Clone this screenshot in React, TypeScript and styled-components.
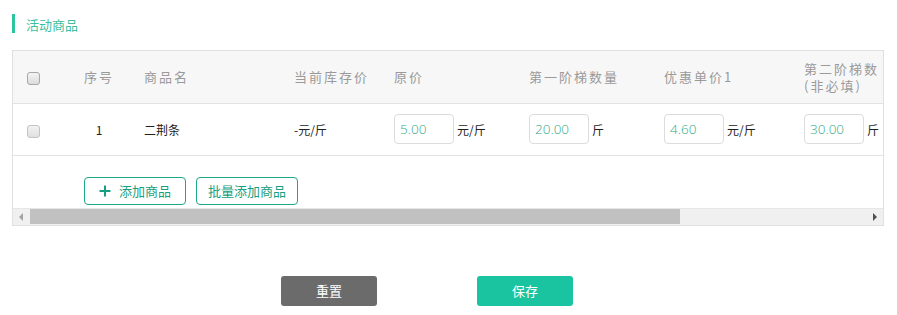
import React from "react";
import styled, { createGlobalStyle } from "styled-components";

const Global = createGlobalStyle`
  html, body { margin: 0; padding: 0; background: #fff; }
  body { font-family: "Noto Sans CJK SC", "Noto Sans", sans-serif; color: #333; }
  * { box-sizing: border-box; }
`;

const Page = styled.div`
  width: 897px;
  padding: 14px 13px 0 12px;
`;

const SectionTitle = styled.div`
  display: flex;
  align-items: center;
  height: 19px;
  border-left: 3px solid #2ec4a0;
  padding-left: 11px;
  font-size: 13px;
  color: #3dbf9f;
  line-height: 19px;
  padding-top: 1px;
`;

const TableBox = styled.div`
  margin-top: 17px;
  border: 1px solid #e1e1e1;
  overflow: hidden;
`;

const Scroller = styled.div`
  overflow: hidden;
`;

const Grid = styled.table`
  width: 1120px;
  table-layout: fixed;
  border-collapse: collapse;
  font-size: 12px;
`;

const HeadRow = styled.tr`
  background: #f7f7f7;
  height: 52px;
  border-bottom: 1px solid #e3e3e3;
`;

const Th = styled.th<{ $w?: number; $center?: boolean; $pl?: number; $pr?: number }>`
  ${(p) => (p.$w ? `width: ${p.$w}px;` : "")}
  padding: 0 ${(p) => (p.$pr ?? 10)}px 0 ${(p) => (p.$pl ?? 15)}px;
  text-align: ${(p) => (p.$center ? "center" : "left")};
  font-weight: normal;
  font-size: 13px;
  color: #9a9a9a;
  letter-spacing: 2px;
  line-height: 17px;
  vertical-align: middle;
`;

const WrapLabel = styled.span`
  display: block;
  width: 82px;
`;

const BodyRow = styled.tr`
  height: 52px;
  border-bottom: 1px solid #e3e3e3;
`;

const Td = styled.td<{ $center?: boolean; $pl?: number }>`
  padding: 0 0 0 ${(p) => (p.$pl ?? 15)}px;
  text-align: ${(p) => (p.$center ? "center" : "left")};
  color: #222;
  font-size: 12px;
  white-space: nowrap;
  vertical-align: middle;
`;

const Check = styled.span<{ $light?: boolean }>`
  display: inline-block;
  width: 13px;
  height: 13px;
  border-radius: 3px;
  border: 1px solid ${(p) => (p.$light ? "#c4c4c4" : "#a8a8a8")};
  background: ${(p) =>
    p.$light
      ? "linear-gradient(#f2f2f2, #e0e0e0)"
      : "linear-gradient(#f4f4f4, #dcdcdc)"};
  vertical-align: middle;
`;

const InputGroup = styled.div`
  display: flex;
  align-items: center;
`;

const NumInput = styled.input`
  width: 60px;
  height: 30px;
  border: 1px solid #dcdcdc;
  border-radius: 4px;
  padding: 0 5px;
  font-family: "Open Sans", "Noto Sans", sans-serif;
  font-size: 13.5px;
  font-weight: 300;
  color: #2fa986;
  outline: none;
  background: #fff;
`;

const Unit = styled.span`
  margin-left: 3px;
  font-size: 12px;
  color: #222;
`;

const ToolRow = styled.div`
  height: 52px;
  display: flex;
  align-items: flex-end;
  gap: 10px;
  padding: 0 0 3px 71px;
`;

const OutlineBtn = styled.button`
  display: inline-flex;
  align-items: center;
  justify-content: center;
  gap: 8px;
  width: 102px;
  height: 28px;
  border: 1px solid #1ba98a;
  border-radius: 4px;
  background: #fff;
  color: #179f81;
  font-family: "Noto Sans CJK SC", sans-serif;
  font-size: 13px;
  padding: 0;
  cursor: pointer;
`;

const ScrollBar = styled.div`
  display: flex;
  height: 17px;
  background: #f0f0f0;
  border-top: 1px solid #e6e6e6;
`;

const Arrow = styled.div<{ $dir: "left" | "right"; $active?: boolean }>`
  width: 16px;
  display: flex;
  align-items: center;
  justify-content: center;
  &::before {
    content: "";
    width: 0;
    height: 0;
    border-top: 4px solid transparent;
    border-bottom: 4px solid transparent;
    ${(p) =>
      p.$dir === "left"
        ? `border-right: 4px solid ${p.$active ? "#505050" : "#a3a3a3"};`
        : `border-left: 4px solid ${p.$active ? "#505050" : "#a3a3a3"};`}
  }
`;

const Track = styled.div`
  flex: 1;
  display: flex;
  align-items: center;
  padding-left: 1px;
`;

const Thumb = styled.div<{ $ratio: number }>`
  width: ${(p) => p.$ratio * 100}%;
  height: 15px;
  background: #c1c1c1;
`;

const Actions = styled.div`
  display: flex;
  gap: 100px;
  margin-top: 50px;
  padding-left: 269px;
`;

const SolidBtn = styled.button<{ $tone: "gray" | "green" }>`
  width: 96px;
  height: 30px;
  border: none;
  border-radius: 3px;
  background: ${(p) => (p.$tone === "gray" ? "#6b6b6b" : "#1bc4a0")};
  color: #fff;
  font-family: "Noto Sans CJK SC", sans-serif;
  font-size: 13px;
  cursor: pointer;
`;

const Plus = () => (
  <svg width="12" height="12" viewBox="0 0 12 12">
    <path d="M6 0.5v11M0.5 6h11" stroke="#179f81" strokeWidth="2" fill="none" />
  </svg>
);

type Cell = { value: string; unit: string };
const cells: Cell[] = [
  { value: "5.00", unit: "元/斤" },
  { value: "20.00", unit: "斤" },
  { value: "4.60", unit: "元/斤" },
  { value: "30.00", unit: "斤" },
];

export default function App() {
  return (
    <>
      <Global />
      <Page>
        <SectionTitle>活动商品</SectionTitle>
        <TableBox>
          <Scroller>
            <Grid>
              <thead>
                <HeadRow>
                  <Th $w={56} $pl={14}>
                    <Check />
                  </Th>
                  <Th $w={60} $center $pl={10}>序号</Th>
                  <Th $w={150}>商品名</Th>
                  <Th $w={100}>当前库存价</Th>
                  <Th $w={135}>原价</Th>
                  <Th $w={135}>第一阶梯数量</Th>
                  <Th $w={140}>优惠单价1</Th>
                  <Th>
                    <WrapLabel>第二阶梯数(非必填)</WrapLabel>
                  </Th>
                </HeadRow>
              </thead>
              <tbody>
                <BodyRow>
                  <Td $pl={14}>
                    <Check $light />
                  </Td>
                  <Td $center $pl={0}>1</Td>
                  <Td>二荆条</Td>
                  <Td>-元/斤</Td>
                  {cells.map((c) => (
                    <Td key={c.value}>
                      <InputGroup>
                        <NumInput defaultValue={c.value} readOnly />
                        <Unit>{c.unit}</Unit>
                      </InputGroup>
                    </Td>
                  ))}
                </BodyRow>
              </tbody>
            </Grid>
            <ToolRow>
              <OutlineBtn>
                <Plus />
                添加商品
              </OutlineBtn>
              <OutlineBtn>批量添加商品</OutlineBtn>
            </ToolRow>
          </Scroller>
          <ScrollBar>
            <Arrow $dir="left" />
            <Track>
              <Thumb $ratio={0.777} />
            </Track>
            <Arrow $dir="right" $active />
          </ScrollBar>
        </TableBox>
        <Actions>
          <SolidBtn $tone="gray">重置</SolidBtn>
          <SolidBtn $tone="green">保存</SolidBtn>
        </Actions>
      </Page>
    </>
  );
}
